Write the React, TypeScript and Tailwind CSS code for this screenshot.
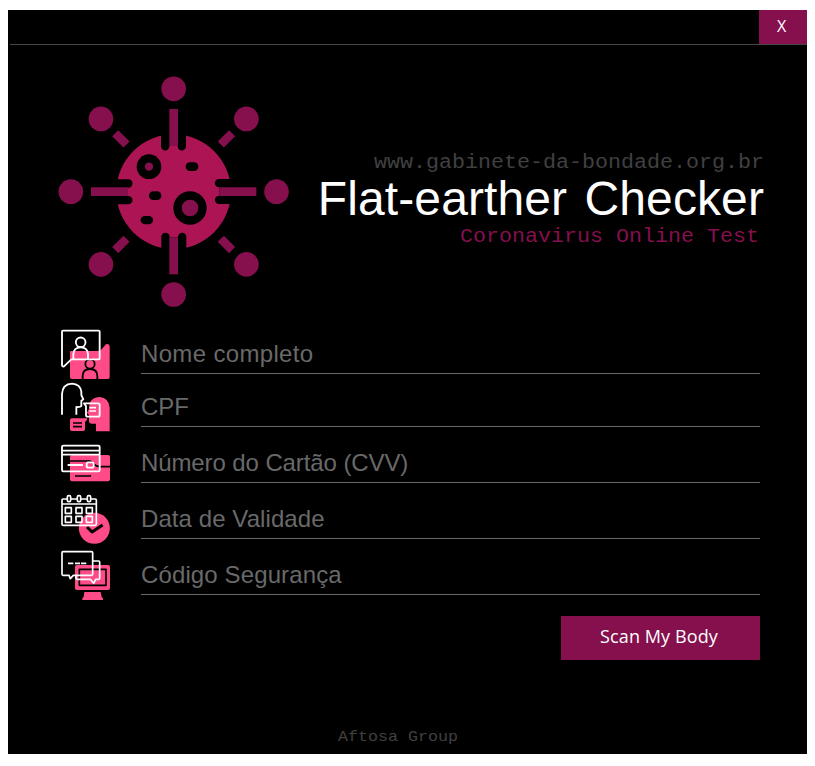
import type { ReactNode } from "react";

const Virus = () => (
  <svg className="h-[250px] w-[250px] shrink-0" viewBox="0 0 750 750" aria-hidden="true">
    <circle cx="371" cy="380" r="172" fill="#ac1454" />
    <g fill="#000">
      {[0, 90, 180, 270].map((a) => (
        <g key={a} transform={`rotate(${a} 371 380)`}>
          <path d="M333 190V244a12.500 12.500 0 0 0 25 0V190ZM383 190V244a12.500 12.500 0 0 0 25 0V190Z" />
          <path d="M357 190H385V243H357Z" />
          <path d="M358 132H384V243H358Z" fill="#860f4e" />
          <circle cx="371" cy="71.500" r="37" fill="#860f4e" />
          <g transform="rotate(45 371 380)" fill="#860f4e">
            <circle cx="371" cy="71.500" r="37" />
            <path d="M358 132H384V180H358Z" />
          </g>
        </g>
      ))}
      <circle cx="297" cy="305" r="37" />
      <circle cx="420" cy="429" r="50" />
      <rect x="407" y="292" width="38" height="26" rx="13" />
      <rect x="297" y="379" width="37" height="26" rx="13" />
      <rect x="272" y="453" width="37" height="25" rx="12.500" />
    </g>
    <circle cx="297" cy="305" r="12.500" fill="#860f4e" />
    <circle cx="420" cy="429" r="25" fill="#860f4e" />
  </svg>
);

const NameIcon = () => (
  <svg className="h-[54px] w-[70px] shrink-0 overflow-visible" viewBox="0 0 210 162" fill="none" strokeLinejoin="round" aria-hidden="true">
    <path d="M63 93H150L168 73Q179 70 179 80V172Q179 177 174 177H66Q60 177 60 171V96Q60 93 63 93Z" fill="#ff4b88" />
    <g stroke="#000" strokeWidth="5.500">
      <circle cx="120" cy="132" r="14" />
      <path d="M98 177V168Q98 147 120 147T142 168V177" />
    </g>
    <g stroke="#fff" strokeWidth="5.500">
      <path d="M39 32H146Q149 32 149 35V115Q149 118 146 118H64L42 139Q36 141 36 135V35Q36 32 39 32Z" />
      <circle cx="92" cy="67" r="14.500" />
      <path d="M70 117V103Q71 82 92 82T114 103V117" />
    </g>
  </svg>
);

const CpfIcon = () => (
  <svg className="h-[53px] w-[70px] shrink-0 overflow-visible" viewBox="0 -12 210 159" fill="none" strokeLinejoin="round" aria-hidden="true">
    <path d="M179 160V89Q177 60 149 57Q126 58 118 77V91L111 105L117 111V130Q117 137 124 137H138V160Z" fill="#ff4b88" />
    <path d="M66 121H111V126L105 132V154Q105 159 100 159H66Q60 159 60 153V127Q60 121 66 121Z" fill="#ff4b88" />
    <path d="M69 135H96M69 146H96" stroke="#000" strokeWidth="5" />
    <path d="M36 110V48Q38 18 66 17Q91 19 94 41V51L100 64L94 68V84Q91 88 79 87V110" stroke="#fff" strokeWidth="5.500" />
    <path d="M102 76H144Q149 76 149 81V111Q149 116 144 116H113Q108 116 108 111V84Z" stroke="#fff" strokeWidth="5.500" />
    <path d="M118 89H138M118 99H138" stroke="#fff" strokeWidth="5" />
  </svg>
);

const CardIcon = () => (
  <svg className="h-[56px] w-[70px] shrink-0 overflow-visible" viewBox="0 -33 210 168" fill="none" strokeLinejoin="round" aria-hidden="true">
    <rect x="60" y="51" width="120" height="79" rx="6" fill="#ff4b88" />
    <path d="M60 69H113Q121 68 128 75Q138 86 150 86H180M75 114H120L123 112" stroke="#000" strokeWidth="5" />
    <g stroke="#fff" strokeWidth="5.500">
      <rect x="36" y="23" width="113" height="77" rx="4" />
      <path d="M36 38H149M36 50H149M53 81H99" />
      <rect x="110" y="73" width="21" height="16" rx="5" fill="#ff4b88" />
    </g>
  </svg>
);

const DateIcon = () => (
  <svg className="h-[56px] w-[70px] shrink-0 overflow-visible" viewBox="0 -15 210 168" fill="none" strokeLinejoin="round" aria-hidden="true">
    <circle cx="133" cy="121" r="46.500" fill="#ff4b88" />
    <path d="M111 117L126 132L158 111" stroke="#000" strokeWidth="9" />
    <g stroke="#fff" strokeWidth="5">
      <path d="M51 33H39Q36 33 36 36V109Q36 112 39 112H136Q139 112 139 109V36Q139 33 136 33H122M62 33H81M92 33H111M36 48H139" />
      {[57, 87, 117].map((x) => (
        <rect key={x} x={x - 5} y="23" width="10" height="18" rx="4" />
      ))}
      {[46, 78, 109].map((x) => (
        <g key={x}>
          <rect x={x} y="59" width="18" height="17" />
          <rect x={x} y="85" width="18" height="18" />
        </g>
      ))}
    </g>
  </svg>
);

const CodeIcon = () => (
  <svg className="h-[56px] w-[70px] shrink-0 overflow-visible" viewBox="0 -15 210 168" fill="none" strokeLinejoin="round" aria-hidden="true">
    <rect x="75" y="63" width="105" height="75" rx="6" fill="#ff4b88" />
    <path d="M88 76H168V124H88Z" stroke="#000" strokeWidth="5" />
    <path d="M103 144H152L155 159L159 163V168H97V163L101 159Z" fill="#ff4b88" />
    <path d="M128 51H146Q149 51 149 54V103Q149 106 146 106H137L131 118L121 106H81Q78 106 78 103V95" stroke="#fff" strokeWidth="5" />
    <path d="M39 23H125Q128 23 128 26V91Q128 94 125 94H70L61 104L57 94H39Q36 94 36 91V26Q36 23 39 23Z" stroke="#fff" strokeWidth="5" />
    <path d="M54 58H70M75 58H90M93 58H109" stroke="#fff" strokeWidth="5" />
  </svg>
);

function Field({ icon, label, className }: { icon: ReactNode; label: string; className: string }) {
  return (
    <div className={`flex ${className}`}>
      {icon}
      <div className="ml-[21px] flex w-[619px] items-end border-b border-[#696969] pb-[5px] text-2xl leading-7 text-[#696969]">
        {label}
      </div>
    </div>
  );
}

export default function App() {
  return (
    <div className="h-[766px] w-[815px] overflow-hidden bg-white pt-[10px] pl-2 font-['Liberation_Sans',Arial,sans-serif]">
      <main className="flex h-[744px] w-[799px] flex-col bg-black">
        <header className="flex h-[34px] justify-end">
          <button className="w-12 bg-[#860f4e] pr-[3px] pb-[2px] font-['Open_Sans',sans-serif] text-base text-white">X</button>
        </header>
        <div className="ml-[2px] h-px shrink-0 bg-[#464646]" />
        <section className="mt-5 ml-[42px] flex">
          <Virus />
          <div className="flex w-[466px] flex-col items-end pt-[87px] whitespace-nowrap">
            <p className="mr-[2px] scale-y-90 font-['Liberation_Mono',monospace] text-[21.67px] leading-[22px] text-[#404040]">
              www.gabinete-da-bondade.org.br
            </p>
            <h1 className="mt-px mr-[2px] text-[48px] leading-[48px] tracking-[0.1px] text-white [word-spacing:4px]">Flat-earther Checker</h1>
            <p className="mt-[3px] mr-[7px] scale-y-90 font-['Liberation_Mono',monospace] text-[21.67px] leading-6 text-[#860f4e]">
              Coronavirus Online Test
            </p>
          </div>
        </section>
        <section className="mt-[5px] ml-[42px]">
          <Field icon={<NameIcon />} label="Nome completo" className="h-[54px] tracking-[0.34px]" />
          <Field icon={<CpfIcon />} label="CPF" className="h-[53px]" />
          <Field icon={<CardIcon />} label="Número do Cartão (CVV)" className="h-14 tracking-[-0.1px]" />
          <Field icon={<DateIcon />} label="Data de Validade" className="h-14 tracking-[0.08px]" />
          <Field icon={<CodeIcon />} label="Código Segurança" className="h-14 tracking-[0.12px]" />
        </section>
        <button className="mt-[21px] mr-[47px] h-11 w-[199px] self-end bg-[#860f4e] pr-[3px] pb-[3px] font-['Open_Sans',sans-serif] text-[18px] tracking-[0.1px] text-white">
          Scan My Body
        </button>
        <footer className="mt-auto mr-[19px] mb-[7px] scale-y-90 text-center font-['Liberation_Mono',monospace] text-[16.67px] leading-5 text-[#404040]">
          Aftosa Group
        </footer>
      </main>
    </div>
  );
}
